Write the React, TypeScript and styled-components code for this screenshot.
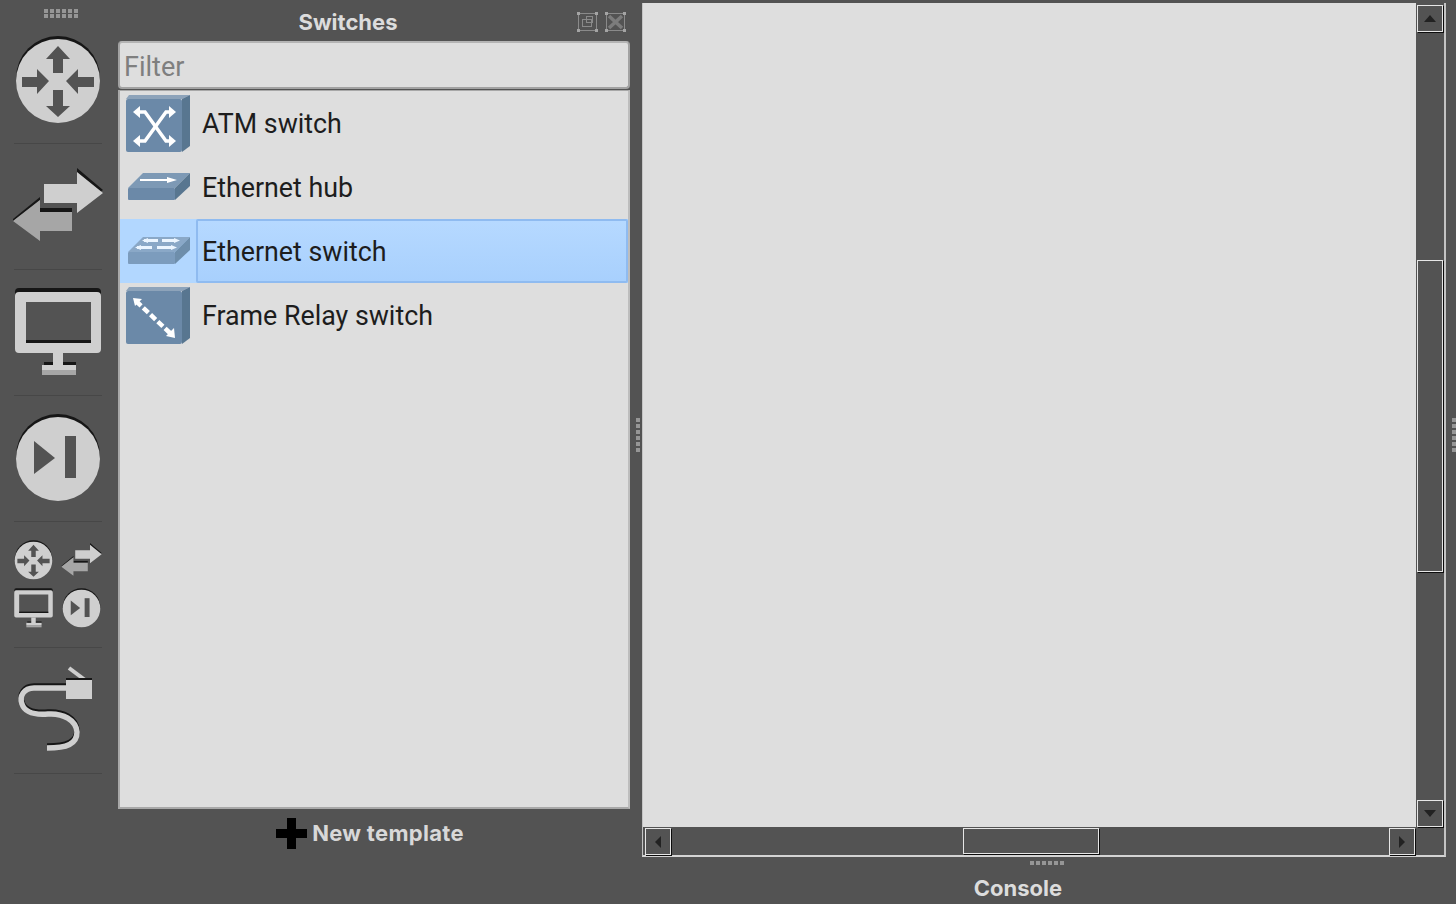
import styled, { createGlobalStyle } from 'styled-components';

const GlobalStyle = createGlobalStyle`
    html, body {
        margin: 0;
        padding: 0;
        background: #535353;
    }
    body {
        font-family: Inter, "Liberation Sans", sans-serif;
    }
`;

const Page = styled.div`
    width: 1456px;
    height: 904px;
    display: flex;
    overflow: hidden;
    background: #535353;
`;

const Grip = styled.div<{ $vertical?: boolean }>`
    flex: none;
    width: ${({ $vertical }) => ($vertical ? '4px' : '34px')};
    height: ${({ $vertical }) => ($vertical ? '34px' : '4px')};
    background-image: ${({ $vertical }) => ($vertical
        ? 'repeating-linear-gradient(to bottom, #969696 0 4px, #535353 4px 6px)'
        : 'repeating-linear-gradient(to right, #969696 0 4px, #535353 4px 6px)')};
`;

const Toolbar = styled.div`
    flex: none;
    width: 116px;
    margin-right: 2px;
    display: flex;
    flex-direction: column;
    align-items: center;
`;

const ToolbarGrip = styled.div`
    height: 18px;
    padding-top: 9px;
    box-sizing: border-box;
    display: flex;
    flex-direction: column;
    gap: 1px;
    margin-left: 6px;
`;

const ToolSection = styled.div`
    flex: none;
    height: 125px;
    width: 100%;
    display: flex;
    align-items: center;
    justify-content: center;
`;

const ToolSeparator = styled.div`
    flex: none;
    width: 88px;
    height: 1px;
    background: #474747;
`;

const ToolGrid = styled.div`
    display: grid;
    grid-template-columns: 48px 48px;
    grid-auto-rows: 48px;
    place-items: center;
    margin-right: 2px;
`;

const ToolIcon = styled.svg<{ $size: number }>`
    display: block;
    width: ${({ $size }) => $size}px;
    height: ${({ $size }) => $size}px;
`;

const Dock = styled.div`
    flex: none;
    width: 512px;
    display: flex;
    flex-direction: column;
`;

const DockTitleBar = styled.div`
    height: 41px;
    flex: none;
    display: flex;
    align-items: center;
    position: relative;
`;

const DockTitle = styled.div`
    flex: 1;
    padding-right: 52px;
    text-align: center;
    font-weight: 700;
    font-size: 22px;
    color: #dcdcdc;
    margin-top: 3px;
`;

const DockButtons = styled.div`
    position: absolute;
    right: 4px;
    top: 11px;
    display: flex;
    gap: 7px;
`;

const FilterInput = styled.div`
    flex: none;
    height: 48px;
    box-sizing: border-box;
    background: #dedede;
    border: 2px solid #a2a2a2;
    border-top-color: #b4b4b4;
    border-radius: 4px;
    padding: 4px 0 0 4px;
    display: flex;
    align-items: center;
    font-family: Roboto, sans-serif;
    font-size: 27px;
    color: #7f7f7f;
`;

const TemplateList = styled.div`
    flex: none;
    height: 719px;
    margin-top: 1px;
    box-sizing: border-box;
    background: #dedede;
    border: 2px solid #a8a8a8;
    border-top-width: 1px;
    border-right-color: #bdbdbd;
`;

const TemplateRow = styled.div<{ $selected?: boolean }>`
    height: 64px;
    display: flex;
    align-items: stretch;
    background: ${({ $selected }) => ($selected ? '#b2d7ff' : 'transparent')};
    svg {
        opacity: ${({ $selected }) => ($selected ? 0.75 : 1)};
    }
`;

const RowIconCell = styled.div`
    flex: none;
    width: 76px;
    display: flex;
    align-items: center;
    justify-content: center;
`;

const RowLabel = styled.div<{ $selected?: boolean }>`
    flex: 1;
    display: flex;
    align-items: center;
    padding: 2px 0 0 4px;
    font-family: Roboto, sans-serif;
    font-size: 26.8px;
    color: #1d1d1d;
    border: 2px solid ${({ $selected }) => ($selected ? '#8fbbf0' : 'transparent')};
    border-radius: 2px;
    background: ${({ $selected }) => ($selected ? 'linear-gradient(#b6d9ff, #a8d0fd)' : 'transparent')};
`;

const DeviceIcon = styled.svg`
    display: block;
    width: 66px;
    height: 60px;
`;

const DockFooter = styled.div`
    flex: 1;
    display: flex;
    align-items: flex-start;
    justify-content: center;
    gap: 4px;
    padding-top: 9px;
    padding-right: 8px;
    font-weight: 700;
    font-size: 22px;
    letter-spacing: 0.3px;
    color: #d8d8d8;
`;

const FooterLabel = styled.span`
    line-height: 30px;
`;

const PlusIcon = styled.svg`
    display: block;
    width: 32px;
    height: 32px;
`;

const SideSplitter = styled.div`
    flex: none;
    width: 12px;
    height: 870px;
    box-sizing: border-box;
    padding-left: 6px;
    display: flex;
    align-items: center;
`;

const RightSplitter = styled.div`
    flex: none;
    width: 10px;
    height: 870px;
    box-sizing: border-box;
    padding-left: 6px;
    display: flex;
    align-items: center;
`;

const Central = styled.div`
    flex: none;
    width: 804px;
    display: flex;
    flex-direction: column;
    padding-top: 3px;
`;

const GraphicsFrame = styled.div`
    flex: none;
    height: 854px;
    box-sizing: border-box;
    display: grid;
    grid-template-columns: 1fr 28px;
    grid-template-rows: 1fr 28px;
    border-left: 1px solid #c4c4c4;
    border-right: 2px solid #c4c4c4;
    border-bottom: 2px solid #d4d4d4;
`;

const Canvas = styled.div`
    background: #dedede;
`;

const VerticalBar = styled.div`
    display: flex;
    flex-direction: column;
    padding: 2px 0 0 1px;
`;

const HorizontalBar = styled.div`
    display: flex;
    padding: 1px 1px 0 2px;
`;

const ScrollButton = styled.div`
    flex: none;
    width: 26px;
    height: 27px;
    box-sizing: border-box;
    border: 1px solid #e6e6e6;
    box-shadow: 1px 1px 0 #0c0c0c;
    display: flex;
    align-items: center;
    justify-content: center;
`;

const VerticalThumb = styled.div<{ $top: number; $length: number }>`
    flex: none;
    width: 26px;
    height: ${({ $length }) => $length}px;
    margin-top: ${({ $top }) => $top}px;
    margin-bottom: auto;
    box-sizing: border-box;
    border: 1px solid #e6e6e6;
    box-shadow: 1px 1px 0 #0c0c0c;
`;

const HorizontalThumb = styled.div<{ $left: number; $length: number }>`
    flex: none;
    height: 26px;
    width: ${({ $length }) => $length}px;
    margin-left: ${({ $left }) => $left}px;
    margin-right: auto;
    box-sizing: border-box;
    border: 1px solid #e6e6e6;
    box-shadow: 1px 1px 0 #0c0c0c;
`;

const BottomSplitter = styled.div`
    flex: none;
    height: 11px;
    display: flex;
    align-items: center;
    justify-content: center;
    padding-left: 6px;
`;

const ConsoleTitle = styled.div`
    padding-right: 52px;
    text-align: center;
    font-weight: 700;
    font-size: 22px;
    color: #dcdcdc;
    margin-top: 7px;
`;

const LIGHT = '#cfcfcf';
const MID = '#a6a6a6';
const BG = '#535353';
const SHADOW = '#161616';

const RouterIcon = ({ size }: { size: number }) => (
    <ToolIcon $size={size} viewBox="0 0 96 96">
        <circle cx="48" cy="45" r="42" fill={SHADOW} />
        <circle cx="48" cy="48" r="42" fill={LIGHT} />
        <g fill={BG}>
            <polygon points="48,13 60,26 53,26 53,40 43,40 43,26 36,26" />
            <polygon points="48,84 60,73 53,73 53,57 43,57 43,73 36,73" />
            <polygon points="39,48 27,36 27,44 12,44 12,54 27,54 27,61" />
            <polygon points="56,48 68,36 68,44 84,44 84,54 68,54 68,61" />
        </g>
    </ToolIcon>
);

const SwitchIcon = ({ size }: { size: number }) => (
    <ToolIcon $size={size} viewBox="0 0 96 96">
        <path d="M34 21h33V9l26 22-3 2-23-18v6H34z" fill={SHADOW} />
        <polygon points="34,25 67,25 67,13 93,34 67,54 67,44 34,44" fill={LIGHT} />
        <rect x="30" y="49" width="32" height="4" fill={SHADOW} />
        <polygon points="30,38 3,60 3,62 30,41" fill={SHADOW} />
        <polygon points="3,62 30,41 30,53 62,53 62,72 30,72 30,82" fill={MID} />
    </ToolIcon>
);

const MonitorIcon = ({ size }: { size: number }) => (
    <ToolIcon $size={size} viewBox="0 0 96 96">
        <rect x="5" y="3" width="86" height="12" rx="4" fill={SHADOW} />
        <path fillRule="evenodd" d="M9 7h78a4 4 0 0 1 4 4v53a4 4 0 0 1-4 4H9a4 4 0 0 1-4-4V11a4 4 0 0 1 4-4zM16 17v41h65V17z" fill={LIGHT} />
        <rect x="16" y="55" width="65" height="3" fill={SHADOW} />
        <path d="M34 80V77h32v3z" fill={SHADOW} />
        <rect x="43" y="68" width="10" height="13" fill={LIGHT} />
        <rect x="32" y="80" width="34" height="5" fill={LIGHT} />
        <rect x="32" y="85" width="34" height="5" fill={MID} />
    </ToolIcon>
);

const StepIcon = ({ size }: { size: number }) => (
    <ToolIcon $size={size} viewBox="0 0 96 96">
        <circle cx="48" cy="45" r="42" fill={SHADOW} />
        <circle cx="48" cy="48" r="42" fill={LIGHT} />
        <polygon points="24,30 45,47 24,63" fill={BG} />
        <rect x="55" y="25" width="11" height="42" fill={BG} />
    </ToolIcon>
);

const CABLE_PATH = 'M56 25H24C14 25 9 33 12 41c3 9 14 11 26 10 15-1 28 6 29 18 0 12-10 16-30 16';

const CableIcon = ({ size }: { size: number }) => (
    <ToolIcon $size={size} viewBox="0 0 96 96">
        <path d={CABLE_PATH} transform="translate(0 -2)" fill="none" stroke={SHADOW} strokeWidth="5.5" />
        <path d={CABLE_PATH} fill="none" stroke={LIGHT} strokeWidth="5.5" />
        <line x1="59" y1="5" x2="75" y2="17" stroke={LIGHT} strokeWidth="4" />
        <rect x="56" y="15" width="26" height="3" fill={SHADOW} />
        <rect x="56" y="17" width="26" height="19" fill={LIGHT} />
    </ToolIcon>
);

const BoxShape = () => (
    <>
        <polygon points="1,6 4,2 65,2 57,6" fill="#8da3ba" />
        <polygon points="57,6 65,2 65,53 57,59" fill="#587690" />
        <rect x="1" y="6" width="56" height="53" rx="2" fill="#6b89a8" />
    </>
);

const FlatShape = () => (
    <>
        <polygon points="3,31 18,16 65,16 50,31" fill="#7d99b5" />
        <polygon points="50,31 65,16 65,29 50,43" fill="#587690" />
        <rect x="3" y="31" width="47" height="12" rx="1" fill="#6b89a8" />
    </>
);

const AtmIcon = () => (
    <DeviceIcon viewBox="0 0 66 60">
        <BoxShape />
        <g fill="none" stroke="#fff" strokeWidth="3.5">
            <path d="M12 19H20L41 48H47" />
            <path d="M12 48H20L41 19H47" />
        </g>
        <g fill="#fff">
            <polygon points="8,19 15,13 15,25" />
            <polygon points="8,48 15,42 15,54" />
            <polygon points="51,19 44,13 44,25" />
            <polygon points="51,48 44,42 44,54" />
        </g>
    </DeviceIcon>
);

const HubIcon = () => (
    <DeviceIcon viewBox="0 0 66 60">
        <FlatShape />
        <rect x="15" y="22" width="30" height="2" fill="#fff" />
        <polygon points="52,23 42,20 42,26" fill="#fff" />
    </DeviceIcon>
);

const EthernetSwitchIcon = () => (
    <DeviceIcon viewBox="0 0 66 60">
        <FlatShape />
        <g fill="#fff">
            <rect x="19" y="18" width="14" height="3" />
            <rect x="37" y="18" width="14" height="3" />
            <rect x="12" y="25" width="15" height="3" />
            <rect x="32" y="25" width="16" height="3" />
            <polygon points="17,19.5 23,17 23,22" />
            <polygon points="55,19.5 49,17 49,22" />
            <polygon points="10,26.5 16,24 16,29" />
            <polygon points="52,26.5 46,24 46,29" />
        </g>
    </DeviceIcon>
);

const FrameRelayIcon = () => (
    <DeviceIcon viewBox="0 0 66 60">
        <BoxShape />
        <path d="M11 16L46 49" fill="none" stroke="#fff" strokeWidth="4.5" strokeDasharray="7 3" />
        <polygon points="8,13 17,14 10,21" fill="#fff" />
        <polygon points="50,53 41,51 49,43" fill="#fff" />
    </DeviceIcon>
);

const FloatIcon = () => (
    <svg width="21" height="22" viewBox="0 0 21 22" fill="none" stroke="#8a8a8a" strokeWidth="1">
        <rect x="1.5" y="2.5" width="18" height="17" />
        <rect x="5.5" y="8.5" width="9" height="7" />
        <rect x="9.5" y="5.5" width="6" height="6" />
        <g fill="#a4a4a4" stroke="none">
            <rect x="0" y="1" width="3" height="3" />
            <rect x="18" y="1" width="3" height="3" />
            <rect x="0" y="18" width="3" height="3" />
            <rect x="18" y="18" width="3" height="3" />
        </g>
    </svg>
);

const CloseIcon = () => (
    <svg width="21" height="22" viewBox="0 0 21 22" fill="none" stroke="#8a8a8a" strokeWidth="1">
        <rect x="1.5" y="2.5" width="18" height="17" />
        <path d="M4 5l13 12M17 5L4 17" stroke="#7c7c7c" strokeWidth="3.5" />
        <g fill="#a4a4a4" stroke="none">
            <rect x="0" y="1" width="3" height="3" />
            <rect x="18" y="1" width="3" height="3" />
            <rect x="0" y="18" width="3" height="3" />
            <rect x="18" y="18" width="3" height="3" />
        </g>
    </svg>
);

const ARROWS = {
    up: '6,2 12,9 0,9',
    down: '0,2 12,2 6,9',
    left: '9,0 9,12 3,6',
    right: '3,0 3,12 9,6',
};

const ScrollArrow = ({ direction }: { direction: keyof typeof ARROWS }) => (
    <svg width="12" height="12" viewBox="0 0 12 12">
        <polygon points={ARROWS[direction]} fill="#222222" />
    </svg>
);

const templates = [
    { name: 'ATM switch', icon: <AtmIcon /> },
    { name: 'Ethernet hub', icon: <HubIcon /> },
    { name: 'Ethernet switch', icon: <EthernetSwitchIcon />, selected: true },
    { name: 'Frame Relay switch', icon: <FrameRelayIcon /> },
];

const App = () => (
    <Page>
        <GlobalStyle />
        <Toolbar>
            <ToolbarGrip>
                <Grip />
                <Grip />
            </ToolbarGrip>
            <ToolSection><RouterIcon size={96} /></ToolSection>
            <ToolSeparator />
            <ToolSection><SwitchIcon size={96} /></ToolSection>
            <ToolSeparator />
            <ToolSection><MonitorIcon size={96} /></ToolSection>
            <ToolSeparator />
            <ToolSection><StepIcon size={96} /></ToolSection>
            <ToolSeparator />
            <ToolSection>
                <ToolGrid>
                    <RouterIcon size={43} />
                    <SwitchIcon size={43} />
                    <MonitorIcon size={43} />
                    <StepIcon size={43} />
                </ToolGrid>
            </ToolSection>
            <ToolSeparator />
            <ToolSection><CableIcon size={96} /></ToolSection>
            <ToolSeparator />
        </Toolbar>
        <Dock>
            <DockTitleBar>
                <DockTitle>Switches</DockTitle>
                <DockButtons>
                    <FloatIcon />
                    <CloseIcon />
                </DockButtons>
            </DockTitleBar>
            <FilterInput>Filter</FilterInput>
            <TemplateList>
                {templates.map(template => (
                    <TemplateRow key={template.name} $selected={template.selected}>
                        <RowIconCell>{template.icon}</RowIconCell>
                        <RowLabel $selected={template.selected}>{template.name}</RowLabel>
                    </TemplateRow>
                ))}
            </TemplateList>
            <DockFooter>
                <PlusIcon viewBox="0 0 32 32">
                    <path d="M11 0h9v11h11v9H20v11h-9V20H0v-9h11z" fill="#000" />
                </PlusIcon>
                <FooterLabel>New template</FooterLabel>
            </DockFooter>
        </Dock>
        <SideSplitter><Grip $vertical /></SideSplitter>
        <Central>
            <GraphicsFrame>
                <Canvas />
                <VerticalBar>
                    <ScrollButton><ScrollArrow direction="up" /></ScrollButton>
                    <VerticalThumb $top={228} $length={312} />
                    <ScrollButton><ScrollArrow direction="down" /></ScrollButton>
                </VerticalBar>
                <HorizontalBar>
                    <ScrollButton><ScrollArrow direction="left" /></ScrollButton>
                    <HorizontalThumb $left={292} $length={136} />
                    <ScrollButton><ScrollArrow direction="right" /></ScrollButton>
                </HorizontalBar>
                <div />
            </GraphicsFrame>
            <BottomSplitter><Grip /></BottomSplitter>
            <ConsoleTitle>Console</ConsoleTitle>
        </Central>
        <RightSplitter><Grip $vertical /></RightSplitter>
    </Page>
);

export default App;
